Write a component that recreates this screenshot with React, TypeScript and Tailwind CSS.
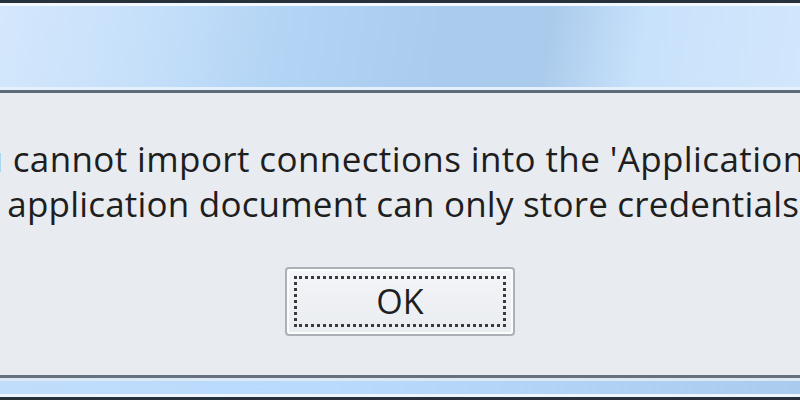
export default function App() {
  return (
    <div className="w-[800px] h-[400px] overflow-hidden flex flex-col bg-[#e8ebf0] font-['Open_Sans',sans-serif]">
      {/* title bar */}
      <div className="h-[3px] bg-[#27313c]" />
      <div className="h-[3px] bg-[#f3f8fe]" />
      <div className="h-[81px] bg-[linear-gradient(100deg,#d4e7fc_0%,#c6e0fa_18%,#b3d4f4_35%,#aacbee_55%,#abcbec_68%,#c8e2fb_80%,#d2e6fc_100%)]" />
      <div className="h-[3px] bg-[#e6f0fb]" />
      <div className="h-[3px] bg-[#5c6b7a]" />

      {/* body */}
      <div className="flex-1 flex flex-col overflow-hidden">
        <div className="mt-[43px] text-[35px] leading-[45px] text-[#1e1e1e] whitespace-nowrap">
          <div className="ml-[-60px] tracking-[0.38px]">You cannot import connections into the 'Application</div>
          <div className="ml-[-63px] tracking-[0.2px]">The application document can only store credentials</div>
        </div>
        <div className="flex justify-center mt-[41px]">
          <button className="w-[230px] h-[69px] rounded-[4px] border-2 border-[#acb1b7] bg-[linear-gradient(#f3f5f8,#e9ecf0)] shadow-[inset_0_0_0_2px_#fbfcfd] p-[7px]">
            <div className="w-full h-full border-[3px] border-dotted border-[#3a3a3a] flex items-center justify-center text-[34px] text-[#1e1e1e]">
              OK
            </div>
          </button>
        </div>
      </div>

      {/* bottom frame */}
      <div className="h-[3px] bg-[#66717d]" />
      <div className="h-[3px] bg-[#dde8f5]" />
      <div className="h-[13px] bg-[linear-gradient(90deg,#c0ddfb_0%,#b9dafc_40%,#abcbee_100%)]" />
      <div className="h-[3px] bg-[#eef5fd]" />
      <div className="h-[3px] bg-[#27313c]" />
    </div>
  );
}
